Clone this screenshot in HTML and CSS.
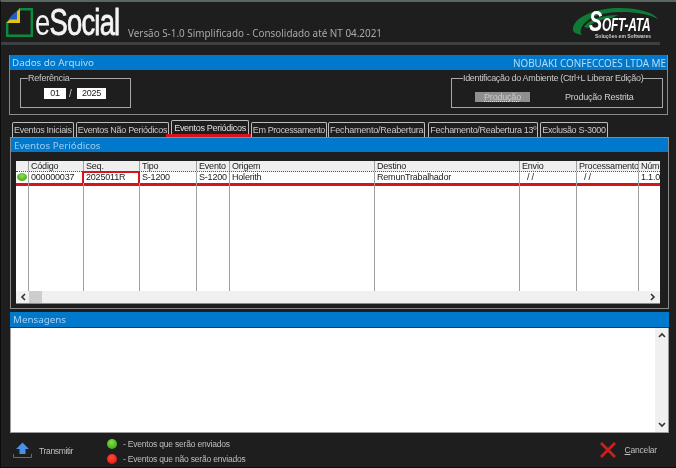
FILE: index.html
```html
<!DOCTYPE html>
<html lang="pt">
<head>
<meta charset="utf-8">
<title>eSocial</title>
<link rel="stylesheet" href="styles.css">
</head>
<body>
<div class="window">
  <header class="top">
    <svg class="logo-mark" width="27" height="29" viewBox="0 0 27 29">
      <path d="M14 1.2H25.8V27.8H1.2V15Z" fill="#1c1c1c" stroke="#0f8a3c" stroke-width="2.4"/>
      <path d="M14 0.5V15H0.5Z" fill="#e8c317"/>
      <path d="M11 3.5V11.5H2.8C4.5 8 7.5 5.2 11 3.5Z" fill="#1d5fc4"/>
    </svg>
    <span class="brand">e<b>Social</b></span>
    <span class="version">Versão S-1.0 Simplificado - Consolidado até NT 04.2021</span>
    <div class="softata">
      <svg class="swoosh" width="88" height="30" viewBox="0 0 88 30">
        <path d="M1 21C3 9 25 1 48 1C66 1 81 5 86 12C76 7 64 5 50 5C30 5 14 10 9 22C8 25 9 27 10 28C4 27 0 25 1 21Z" fill="#0f7a35"/>
        <path d="M12 20C17 12 32 8 46 8L40 11C30 12 20 15 16 21Z" fill="#0f7a35"/>
      </svg>
      <span class="soft-name"><b class="soft-s">S</b>OFT-ATA</span>
      <span class="soft-sub">Soluções em Softwares</span>
    </div>
  </header>
  <div class="top-rule"></div>

  <section class="file-panel">
    <div class="bar file-bar"><span>Dados do Arquivo</span><span class="company">NOBUAKI CONFECCOES LTDA ME</span></div>
    <div class="file-body">
      <fieldset class="group ref-group">
        <legend>Referência</legend>
        <span class="field f-month">01</span><span class="slash">/</span><span class="field f-year">2025</span>
      </fieldset>
      <fieldset class="group env-group">
        <legend>Identificação do Ambiente (Ctrl+L Liberar Edição)</legend>
        <span class="env env-on">Produção</span>
        <span class="env env-off">Produção Restrita</span>
      </fieldset>
    </div>
  </section>

  <nav class="tabs">
    <span class="tab">Eventos Iniciais</span>
    <span class="tab">Eventos Não Periódicos</span>
    <span class="tab tab-active">Eventos Periódicos<i class="tab-mark"></i></span>
    <span class="tab tab-tight">Em Processamento</span>
    <span class="tab tab-wide">Fechamento/Reabertura</span>
    <span class="tab">Fechamento/Reabertura 13º</span>
    <span class="tab">Exclusão S-3000</span>
  </nav>

  <section class="events-panel">
    <div class="bar events-bar">Eventos Periódicos</div>
    <div class="grid-wrap">
      <div class="grid">
        <div class="row head">
          <span></span><span>Código</span><span>Seq.</span><span>Tipo</span><span>Evento</span><span>Origem</span><span>Destino</span><span>Envio</span><span>Processamento</span><span>Núme</span>
        </div>
        <div class="row data">
          <span class="dot-cell"><i class="dot dot-green"></i></span><span>000000037</span><span class="seq">2025011R<i class="seq-mark"></i></span><span>S-1200</span><span>S-1200</span><span>Holerith</span><span>RemunTrabalhador</span><span class="date">/ /</span><span class="date">/ /</span><span>1.1.0</span>
          <i class="row-mark"></i>
        </div>
        <div class="row fill">
          <span></span><span></span><span></span><span></span><span></span><span></span><span></span><span></span><span></span><span></span>
        </div>
        <div class="hscroll">
          <svg class="arrow" width="6" height="8" viewBox="0 0 6 8"><path d="M5 1L2 4L5 7" fill="none" stroke="#333" stroke-width="1.6"/></svg>
          <span class="thumb"></span>
          <svg class="arrow arrow-r" width="6" height="8" viewBox="0 0 6 8"><path d="M1 1L4 4L1 7" fill="none" stroke="#333" stroke-width="1.6"/></svg>
        </div>
      </div>
    </div>
  </section>

  <section class="msg-panel">
    <div class="bar msg-bar">Mensagens</div>
    <div class="msg-body">
      <div class="vscroll">
        <svg width="8" height="6" viewBox="0 0 8 6"><path d="M1 5L4 2L7 5" fill="none" stroke="#333" stroke-width="1.6"/></svg>
        <svg width="8" height="6" viewBox="0 0 8 6"><path d="M1 1L4 4L7 1" fill="none" stroke="#333" stroke-width="1.6"/></svg>
      </div>
    </div>
  </section>

  <footer class="bottom">
    <div class="send">
      <svg width="19" height="17" viewBox="0 0 19 17">
        <path d="M9.5 0.5L16 7H12.5V12H6.5V7H3Z" fill="#4a90ea"/>
        <path d="M0.5 12V15.5H18.5V12" fill="none" stroke="#3f6fc0" stroke-width="1"/>
      </svg>
      <span>Transmitir</span>
    </div>
    <div class="legend">
      <div class="legend-row"><i class="dot dot-big dot-green"></i><span>- Eventos que serão enviados</span></div>
      <div class="legend-row"><i class="dot dot-big dot-red"></i><span>- Eventos que não serão enviados</span></div>
    </div>
    <div class="cancel">
      <svg width="16" height="16" viewBox="0 0 16 16"><path d="M1 1L15 15M15 1L1 15" stroke="#d01f1f" stroke-width="2.6"/></svg>
      <span><u>C</u>ancelar</span>
    </div>
  </footer>
</div>
</body>
</html>
```
FILE: styles.css
```css
* { box-sizing: border-box; }
html, body { margin: 0; padding: 0; background: #1e1e1e; }
body { width: 676px; height: 468px; overflow: hidden; }

.window {
  width: 676px;
  height: 468px;
  background: #1e1e1e;
  border-top: 2px solid #5b655f;
  border-left: 1px solid #0c0c0c;
  border-bottom: 1px solid #0c0c0c;
  color: #d8d8d8;
  font-family: "Liberation Sans", sans-serif;
  font-size: 9px;
  letter-spacing: -0.2px;
  filter: blur(0.35px);
  display: flex;
  flex-direction: column;
}

/* header */
.top {
  position: relative;
  height: 40px;
  display: flex;
  align-items: flex-start;
  padding: 6px 0 0 5px;
}
.logo-mark { flex: none; }
.brand {
  margin-left: 2px;
  margin-top: -3px;
  font-size: 36px;
  line-height: 36px;
  letter-spacing: -1px;
  color: #f4f4f4;
  width: 93px;
  flex: none;
  white-space: nowrap;
  transform: scaleX(0.76);
  transform-origin: left;
}
.brand b { font-weight: normal; -webkit-text-stroke: 0.8px #f4f4f4; }
.version {
  margin: 18px 0 0 0;
  font-family: "Noto Sans", sans-serif;
  font-size: 9.9px;
  letter-spacing: 0;
  line-height: 14px;
  color: #a9a9a9;
  white-space: nowrap;
}
.softata {
  position: absolute;
  left: 571px;
  top: 5px;
  width: 92px;
  height: 34px;
}
.swoosh { position: absolute; left: 0; top: 0; }
.soft-name {
  position: absolute;
  left: 17px;
  top: 4px;
  font: italic bold 18px/20px "Liberation Sans", sans-serif;
  letter-spacing: -0.3px;
  color: #fff;
  white-space: nowrap;
  transform: scaleX(0.66);
  transform-origin: left;
}
.soft-s { font-size: 30px; }
.soft-sub {
  position: absolute;
  left: 23px;
  top: 26px;
  font: bold 5px/6px "Liberation Sans", sans-serif;
  letter-spacing: 0;
  color: #ccc;
  white-space: nowrap;
}
.top-rule {
  height: 3px;
  margin-right: 16px;
  background: #3d3f40;
}

/* bars */
.bar {
  background: #0078cc;
  color: #b6dcf6;
  font-family: "Noto Sans", sans-serif;
  font-size: 9.8px;
  letter-spacing: 0;
  display: flex;
  align-items: center;
  justify-content: space-between;
  padding-left: 2px;
}

/* file panel */
.file-panel {
  margin: 10px 8px 0 8px;
  height: 60px;
  border: 1px solid #8a8a8a;
  border-top: 0;
}
.file-bar { height: 15px; padding-right: 1px; }
.company { color: #b6dcf6; font-size: 9.9px; }
.file-body {
  display: flex;
  justify-content: space-between;
  padding: 0 4px 0 10px;
}
.group {
  position: relative;
  margin: 3px 0 0;
  padding: 0;
  height: 35px;
  border: 1px solid #a6a6a6;
  color: #c8c8c8;
}
.group legend {
  padding: 0;
  margin-left: 7px;
  font-size: 9px;
  line-height: 10px;
  white-space: nowrap;
}
.ref-group { width: 111px; }
.field {
  position: absolute;
  top: 5px;
  height: 11px;
  background: #fff;
  color: #222;
  font-size: 9px;
  line-height: 11px;
  text-align: center;
}
.f-month { left: 23px; width: 22px; }
.f-year { left: 56px; width: 29px; }
.slash { position: absolute; left: 48px; top: 5px; font-size: 10px; line-height: 11px; }
.env-group { width: 212px; }
.env-group legend { margin-left: 11px; letter-spacing: -0.32px; }
.env {
  position: absolute;
  top: 9px;
  height: 10px;
  font-size: 9px;
  line-height: 10px;
  text-align: center;
  white-space: nowrap;
}
.env-on {
  left: 23px;
  width: 55px;
  background: #8f8f8f;
  color: #c9c9c9;
  text-decoration: underline dotted #ddd;
}
.env-off { left: 113px; width: 68px; color: #d0d0d0; }

/* tabs */
.tabs {
  display: flex;
  height: 17px;
  margin: 5px 0 0 11px;
  align-items: flex-end;
}
.tab {
  position: relative;
  height: 15px;
  margin-right: 2px;
  padding: 0 1px;
  border: 1px solid #bdbdbd;
  border-bottom: 0;
  border-radius: 2px 2px 0 0;
  line-height: 15px;
  letter-spacing: -0.3px;
  color: #c9c9c9;
  white-space: nowrap;
}
.tab-active { height: 17px; line-height: 14px; padding: 0 2px; color: #e0e0e0; }
.tab-tight { letter-spacing: -0.4px; margin-right: 1px; }
.tab-wide { letter-spacing: -0.2px; margin-right: 3px; }
.tab-mark {
  position: absolute;
  left: -6px;
  right: -4px;
  bottom: 0;
  height: 3px;
  background: #d5141c;
}

/* events panel */
.events-panel {
  margin: 0 7px 0 9px;
  height: 172px;
  border: 1px solid #8a8a8a;
  background: #1e1e1e;
}
.events-bar { height: 14px; color: #9ccdf0; padding-left: 3px; }
.grid-wrap { padding: 9px 7px 3px 5px; }
.grid { width: 644px; height: 143px; background: #fff; display: flex; flex-direction: column; border-bottom: 1px solid #8a8a8a; }
.row {
  display: grid;
  grid-template-columns: 13px 55px 56px 57px 33px 145px 145px 57px 62px 21px;
  position: relative;
  color: #222;
  font-size: 9px;
}
.row > span {
  border-right: 1px solid #a0a0a0;
  padding-left: 2px;
  white-space: nowrap;
  overflow: hidden;
}
.row > span:last-of-type { border-right: 0; }
.head { height: 11px; line-height: 11px; background: #efefef; border-bottom: 1px dotted #555; }
.data { height: 11px; line-height: 11px; }
.fill { flex: 1; }
.dot-cell { padding: 0 !important; overflow: visible !important; position: relative; }
.date { padding-left: 7px !important; }
.seq { position: relative; overflow: visible !important; }
.seq-mark {
  position: absolute;
  left: -2px;
  top: -1px;
  right: -1px;
  height: 12px;
  border: 2px solid #d5141c;
  border-bottom: 0;
  pointer-events: none;
}
.row-mark {
  position: absolute;
  left: 0;
  right: 0;
  top: 11px;
  height: 2.5px;
  background: #d5141c;
}
.dot { display: block; border-radius: 50%; }
.dot-cell .dot {
  width: 10px;
  height: 8px;
  margin: 1px 0 0 1px;
  background: radial-gradient(circle at 50% 35%, #8fe04a, #2f9a18);
}
.dot-big { width: 10px; height: 10px; flex: none; }
.dot-green { background: radial-gradient(circle at 45% 35%, #86e040, #2a9a14); }
.dot-red { background: radial-gradient(circle at 45% 35%, #ff4a3a, #d80e0e); }
.hscroll {
  height: 12px;
  flex: none;
  background: #f0f0f0;
  display: flex;
  align-items: center;
  position: relative;
}
.arrow { margin-left: 4px; flex: none; }
.thumb { width: 13px; height: 12px; margin-left: 3px; background: #cdcdcd; }
.arrow-r { margin-left: auto; margin-right: 4px; }

/* messages */
.msg-panel { margin: 3px 7px 0 9px; }
.msg-bar { height: 16px; padding-left: 3px; color: #a5d2f2; border-bottom: 1px solid #333; }
.msg-body {
  height: 105px;
  background: #fff;
  border: 1px solid #9a9a9a;
  border-top: 0;
  display: flex;
  justify-content: flex-end;
}
.vscroll {
  width: 13px;
  background: #f0f0f0;
  display: flex;
  flex-direction: column;
  align-items: center;
  justify-content: space-between;
  padding: 4px 0;
}

/* footer */
.bottom {
  position: relative;
  flex: 1;
  display: flex;
  align-items: flex-start;
  font-size: 8.5px;
  color: #bfbfbf;
}
.send { display: flex; align-items: center; gap: 7px; margin: 9px 0 0 12px; width: 94px; letter-spacing: -0.35px; }
.legend { display: flex; flex-direction: column; gap: 5px; margin-top: 6px; }
.legend-row { display: flex; align-items: center; gap: 6px; height: 10px; line-height: 10px; }
.cancel { display: flex; align-items: center; gap: 9px; margin: 9px 0 0 auto; padding-right: 19px; }
```
